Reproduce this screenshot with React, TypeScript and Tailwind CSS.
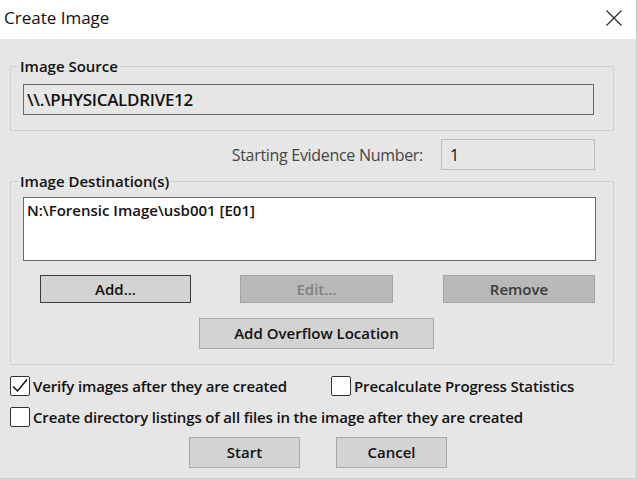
const font = { fontFamily: '"Open Sans", "Noto Sans", sans-serif' };

type BtnProps = {
  label: string;
  className?: string;
  variant?: "default" | "focused" | "disabled";
  dim?: boolean;
};

const Button = ({ label, className = "", variant = "default", dim }: BtnProps) => {
  const look =
    variant === "focused"
      ? "bg-[#d3d3d3] border-[1.5px] border-[#3a3a3a] text-[#111]"
      : variant === "disabled"
        ? "bg-[#b9b9b9] border border-[#a3a3a3]"
        : "bg-[#d3d3d3] border border-[#a8a8a8] text-[#111]";
  return (
    <button
      className={`flex items-center justify-center text-[15px] font-semibold ${look} ${
        dim ? "text-[#808080]" : variant === "disabled" ? "text-[#3a3a3a]" : ""
      } ${className}`}
    >
      {label}
    </button>
  );
};

const Checkbox = ({ checked, label }: { checked?: boolean; label: string }) => (
  <label className="flex items-center gap-[3px] text-[15px] font-semibold tracking-[-0.15px] text-[#111]">
    <span className="w-[20px] h-[20px] bg-white border border-[#333] rounded-[2px] flex items-center justify-center">
      {checked && (
        <svg width="18" height="18" viewBox="0 0 18 18" fill="none">
          <path d="M2 9.5 L6.5 14 L16 2.5" stroke="#111" strokeWidth="1.5" />
        </svg>
      )}
    </span>
    {label}
  </label>
);

export default function App() {
  return (
    <div className="w-[637px] h-[479px] bg-[#e6e6e6] border-r border-b border-[#cbcbcb] flex flex-col" style={font}>
      {/* TITLE BAR */}
      <div className="h-[39px] bg-white flex items-center justify-between pl-[4px] pr-[14px] shrink-0">
        <span className="text-[17px] text-[#111] -mt-[4px]">Create Image</span>
        <svg width="16" height="16" viewBox="0 0 16 16" className="-mt-[4px]">
          <path d="M0.5 0.5 L15.5 15.5 M15.5 0.5 L0.5 15.5" stroke="#222" strokeWidth="1.1" />
        </svg>
      </div>

      {/* IMAGE SOURCE */}
      <fieldset className="ml-[10px] mt-[17px] w-[604px] border border-[#cfcfcf] pl-[12px] pr-[19px] pb-[15px]">
        <legend className="-ml-[5px] px-[2px] text-[15px] font-semibold text-[#111] leading-[20px]">Image Source</legend>
        <div className="mt-[8px] h-[31px] border border-[#6a6a6a] flex items-center pl-[3px] text-[17px] font-semibold tracking-[-0.3px] text-[#111]">
          \\.\PHYSICALDRIVE12
        </div>
      </fieldset>

      {/* STARTING EVIDENCE NUMBER */}
      <div className="mt-[8px] flex justify-end items-center pr-[41px] gap-[18px]">
        <span className="text-[16px] tracking-[-0.3px] text-[#444]">Starting Evidence Number:</span>
        <div className="w-[154px] h-[31px] border border-[#bdbdbd] flex items-center pl-[8px] text-[16px] text-[#111]">1</div>
      </div>

      {/* IMAGE DESTINATIONS */}
      <fieldset className="ml-[10px] mt-[1px] w-[604px] border border-[#cfcfcf] pl-[12px] pr-[17px] pb-[15px]">
        <legend className="-ml-[5px] px-[2px] text-[15px] font-semibold text-[#111] leading-[20px]">Image Destination(s)</legend>
        <div className="mt-[6px] h-[64px] bg-white border border-[#6a6a6a] pl-[3px] pt-[1px] text-[15px] font-semibold text-[#111]">
          N:\Forensic Image\usb001 [E01]
        </div>
        <div className="mt-[14px] flex items-center h-[28px]">
          <Button label="Add..." variant="focused" className="ml-[17px] w-[151px] h-[28px]" />
          <Button label="Edit..." variant="disabled" dim className="ml-[49px] w-[153px] h-[28px]" />
          <Button label="Remove" variant="disabled" className="ml-[50px] w-[152px] h-[28px]" />
        </div>
        <div className="mt-[15px] flex">
          <Button label="Add Overflow Location" className="ml-[176px] w-[235px] h-[31px]" />
        </div>
      </fieldset>

      {/* OPTIONS */}
      <div className="mt-[11px] pl-[10px] flex items-center h-[20px]">
        <div className="w-[321px]">
          <Checkbox checked label="Verify images after they are created" />
        </div>
        <Checkbox label="Precalculate Progress Statistics" />
      </div>
      <div className="mt-[11px] pl-[10px] flex items-center h-[20px]">
        <Checkbox label="Create directory listings of all files in the image after they are created" />
      </div>

      {/* ACTIONS */}
      <div className="mt-[10px] flex justify-center gap-[36px]">
        <Button label="Start" className="w-[111px] h-[31px]" />
        <Button label="Cancel" className="w-[111px] h-[31px]" />
      </div>
    </div>
  );
}
